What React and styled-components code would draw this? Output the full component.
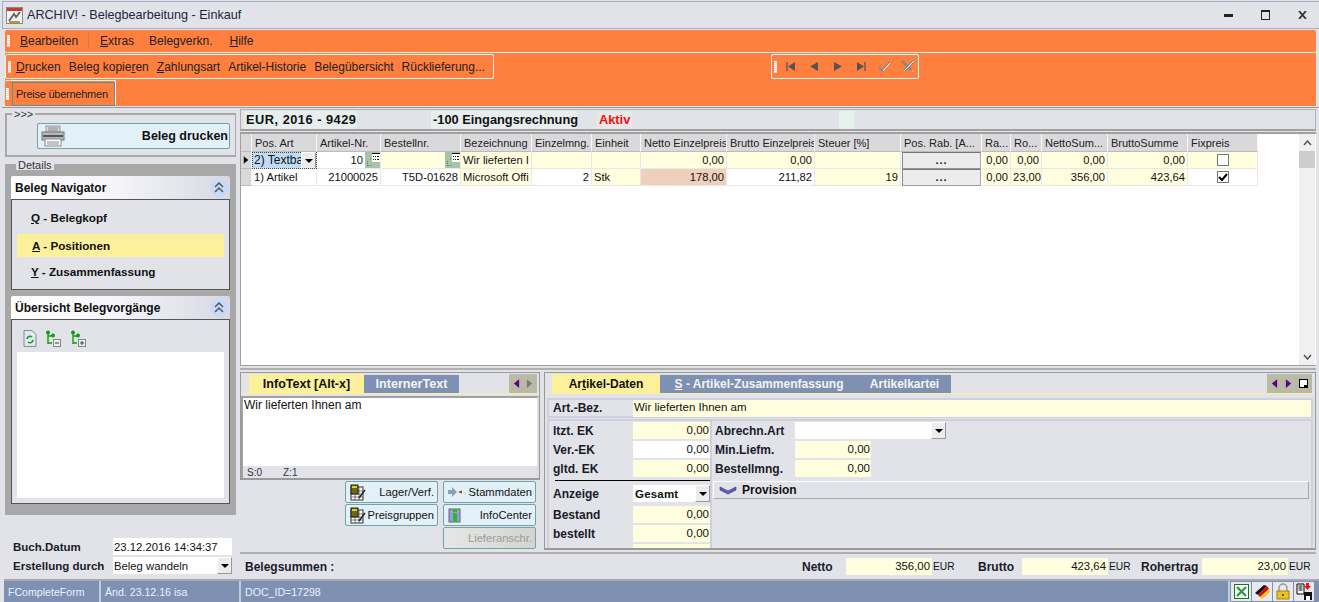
import React from "react";
import styled, { createGlobalStyle } from "styled-components";

const Global = createGlobalStyle`
  html, body { margin: 0; padding: 0; width: 1319px; height: 602px; overflow: hidden; background: #e2e3e8; }
  * { box-sizing: border-box; }
  #root { font: 12px "Liberation Sans", Arial, sans-serif; color: #111; }
`;

const Win = styled.div`
  width: 1319px; height: 602px; display: flex; flex-direction: column;
  background: #e2e3e8; padding-top: 1px; overflow: hidden;
  border-left: 2px solid #e2e3e8;
`;
const TitleBar = styled.div`
  height: 28px; flex: none; display: flex; align-items: center;
  border-top: 1px solid #a5a9c0; border-bottom: 1px solid #a5a9c0;
  padding: 0 0 0 4px; color: #1c2540;
  box-shadow: inset 1px 0 0 #a5a9c0;
`;
const TitleText = styled.span` font-size: 12.6px; margin-left: 4px; flex: 1; `;
const WinBtns = styled.div` display: flex; flex: none; margin-right: -2px; color: #222; align-items:center; `;
const WinBtn = styled.span` width: 37px; display: flex; justify-content: center; `;

const Orange = styled.div` margin: 1px 3px 0 3px; background: #ff7f3f; flex: none; `;
const MenuBar = styled(Orange)`
  height: 23px; display: flex; align-items: center; padding-left: 2px; margin-top: 1px;
  border-bottom: 1px solid #f0f0f0; border-radius: 2px;
`;
const Grip = styled.span`
  width: 3px; height: 12px; flex: none; margin-right: ${p => p.$mr ?? 10}px;
  background: repeating-linear-gradient(#fff 0 1px, #d8d8d8 1px 2px);
`;
const MenuItem = styled.span`
  font-size: 12px; color: #222; margin-right: ${p => p.$mr}px;
  u { text-decoration: underline; }
`;
const MenuSep = styled.span` width: 1px; height: 16px; background: #c87a50; margin-right: 11px; `;
const ToolBand = styled(Orange)` height: 53px; margin-top: 0; display: flex; flex-direction: column; `;
const ToolRow = styled.div` height: 27px; display: flex; padding-top: 1px; `;
const Tool = styled.div`
  height: 25px; border: 1px solid #f2f2f2; border-radius: 2px; display: flex; align-items: center; padding-left: 2px;
`;
const Print = styled(Tool)` width: 489px; `;
const Nav = styled(Tool)` width: 148px; margin-left: 277px; `;
const TB = styled.span` margin-right: 8px; color: #222; white-space: nowrap; `;
const NavI = styled.span` width: 23.5px; flex: none; display: flex; justify-content: center; `;
const PreiseWrap = styled.div`
  width: 111px; height: 26px; border: 1px solid #f2f2f2; border-left: none; border-bottom: none; border-radius: 2px; display: flex; align-items: center; padding-left: 1px;
`;
const Preise = styled.span`
  flex: 1; height: 24px; border: 1px solid #5f8e98; margin-left: -6px; padding-left: 3px;
  display: flex; align-items: center; font-size: 11px; letter-spacing: -0.25px; color: #222; white-space: nowrap;
`;

const Main = styled.div`
  flex: 1; min-height: 0; display: grid; grid-template-columns: 236px 1fr; padding: 0 3px 0 2px; border-top: 1px solid #999; margin-top: 1px;
`;
const Left = styled.div` display: flex; flex-direction: column; padding-top: 1px; min-height: 0; `;
const Right = styled.div` display: flex; flex-direction: column; padding-top: 1px; min-height: 0; min-width: 0; `;

const Group = styled.fieldset`
  margin: 0 0 0 1px; padding: 0; border: 1px solid #a8a8a8; border-width: 2px 1px 2px 2px; width: 231px; min-width: 0;
  legend { padding: 0 2px; margin-left: 5px; font-size: 11px; line-height: 10px; color: #333; }
`;
const PrintGroup = styled(Group)` height: 48px; display: flex; justify-content: flex-end; padding: 4px 5px 0 0; flex: none; `;
const DetailsGroup = styled(Group)`
  height: 355px; flex: none; margin-top: 3px; background: #a8a8a8; padding: 6px 5px 0 4px; position: relative;
  legend { background: #e2e3e8; }
`;
const PrintBtn = styled.div`
  width: 193px; height: 26px; border: 1px solid #6fa5a8; background: #e2f0f8; border-radius: 2px;
  display: flex; align-items: center; justify-content: space-between; padding: 0 1px 0 3px; font-weight: bold; font-size: 12.5px;
`;
const PanelHead = styled.div`
  height: 23px; display: flex; align-items: center; justify-content: space-between; padding: 0 2px 0 4px; margin-top: ${p => p.$mt || 0}px;
  background: linear-gradient(90deg, #fff 0%, #f6f6fa 45%, #d8d8e4 100%); font-weight: bold; font-size: 12px; border-radius: 2px 2px 0 0;
`;
const Collapse = styled.span`
  width: 18px; height: 18px; border-radius: 50%; background: #c6dcf4; display: flex; align-items: center; justify-content: center;
`;
const NavBody = styled.div`
  height: 91px; border: 1px solid #555; background: #e2e3e8; padding: 6px 5px 0 5px; display: flex; flex-direction: column;
`;
const NavItem = styled.div`
  height: 23px; flex: none; margin-bottom: ${p => p.$mb}px; display: flex; align-items: center; padding-left: ${p => p.$on ? 15 : 14}px; font-weight: bold; font-size: 11.7px;
  background: ${p => p.$on ? "#fdf09a" : "transparent"};
`;
const TreeBody = styled.div`
  height: 185px; border: 1px solid #555; background: #e2e3e8; padding: 10px 5px 0 5px; display: flex; flex-direction: column;
`;
const TreeIcons = styled.div` height: 22px; display: flex; gap: 8px; padding-left: 6px; flex: none; `;
const TreeArea = styled.div` flex: 1; background: #fff; margin-bottom: 5px; `;

const FormArea = styled.div`
  flex: 1; display: flex; flex-direction: column; justify-content: flex-end; padding: 0 8px 4px 9px;
`;
const FormRow = styled.div` display: flex; align-items: center; height: 19px; font-weight: bold; font-size: 11.5px; color: #1a1a2a; `;
const FormLabel = styled.span` width: 100px; flex: none; `;
const FormVal = styled.span`
  flex: 1; height: 17px; background: #fff; font-weight: normal; display: flex; align-items: center; justify-content: space-between; color: #111; padding-left: 1px; font-size: 11.3px; white-space: nowrap;
`;
const DropBtn = styled.span`
  width: 15px; height: 17px; flex: none; background: #ececec; border: 1px solid #fff; border-right-color: #999; border-bottom-color: #999; display: flex; align-items: center; justify-content: center;
  &::after { content: ""; border: 4px solid transparent; border-top-color: #000; border-bottom: none; width: 0; height: 0; }
`;

const InfoBar = styled.div`
  height: 22px; flex: none; border: 1px solid #b0b0b0; border-bottom: 2px solid #a0a0a0; display: flex; align-items: center; padding-left: 3px; font-weight: bold;
`;
const Seg = styled.span`
  height: 18px; background: ${p => p.$bg || "#e6eeee"}; color: ${p => p.$c || "#111"}; display: flex; align-items: center;
  margin-left: ${p => p.$ml}px; width: ${p => p.$w}px; padding-left: 2px; white-space: nowrap; font-size: 12.8px; letter-spacing: ${p => p.$ls || 0}px;
`;

const GridBox = styled.div`
  height: 234px; flex: none; margin-top: 1px; background: #fff; border-top: 2px solid #a0a0a0; border-left: 1px solid #a0a0a0; border-bottom: 1px solid #a0a0a0; display: flex; position: relative;
`;
const GridMain = styled.div` flex: 1; min-width: 0; `;
const Row = styled.div`
  display: grid; grid-template-columns: 11px 65px 64px 80px 71px 60px 49px 86px 88px 86px 81px 29px 31px 66px 80px 70px; height: ${p => p.$h}px; width: 1018px;
`;
const Head = styled.div`
  background: #d9d9dc; border-right: 1px solid #f8f8f8; border-bottom: 1px solid #bbb; padding: 0 3px; display: flex; align-items: center; font-size: 11px; overflow: hidden; white-space: nowrap; color: #222;
`;
const Cell = styled.div`
  background: ${p => p.$bg || "#fff"}; border-right: 1px solid #e8e8e8; border-bottom: 1px solid #e8e8e8; padding: 0 2px; display: flex; align-items: center;
  justify-content: ${p => p.$r ? "flex-end" : "flex-start"}; overflow: hidden; white-space: nowrap; font-size: 11.2px; color: #111; position: relative;
`;
const SelCell = styled(Cell)`
  background: #bfdcf5; outline: 1px dotted #444; outline-offset: -1px; padding: 0 16px 0 2px; justify-content: flex-start; font-size: 12px;
`;
const CellDrop = styled(DropBtn)` position: absolute; right: 0; top: 0; `;
const Lookup = styled.span`
  width: 15px; height: 16px; flex: none; background: #a8c4a8; display: flex; align-items: center; justify-content: center; margin-left: 2px; margin-right: -2px;
`;
const Ind = styled.div` background: #d9d9dc; border-right: 1px solid #f8f8f8; border-bottom: 1px solid #bbb; display: flex; align-items: center; justify-content: center; `;
const RabBtn = styled.div`
  background: #ececec; border: 1px solid #999; border-top-color: #777; border-left-color: #888; border-right-color: #aaa; margin: 0 1px; display: flex; align-items: center; justify-content: center; font-weight: bold; font-size: 11px; letter-spacing: 1px; padding-bottom: 2px;
`;
const Check = styled.span`
  width: 12px; height: 12px; background: #fff; border: 1px solid #777; display: flex; align-items: center; justify-content: center; margin: 0 auto;
`;
const Scroll = styled.div`
  position: absolute; top: 0; bottom: 0; right: 1px; width: 16px; background: #f0f0f0; display: flex; flex-direction: column; justify-content: space-between; align-items: center;
`;
const Thumb = styled.div` position: absolute; top: 17px; left: 0; width: 16px; height: 17px; background: #cdcdcd; `;
const ScrollBtn = styled.span` height: 17px; display: flex; align-items: center; `;

const Lower = styled.div` height: 182px; flex: none; display: flex; gap: 4px; margin-top: 2px; border-top: 2px solid #b0b0b0; padding-top: 2px; `;
const LeftPane = styled.div` width: 300px; flex: none; `;
const RightPane = styled.div`
  flex: 1; min-width: 0; border: 1px solid #999; border-bottom-width: 2px; height: 178px; padding-top: 1px; overflow: hidden;
`;
const TabBox = styled.div` height: 108px; border: 1px solid #999; border-width: 1px 1px 2px 1px; padding-top: 1px; `;
const TabStrip = styled.div`
  height: 20px; display: flex; align-items: flex-end; padding-left: ${p => p.$pl}px; border-bottom: 1px solid #fdf09a; position: relative;
`;
const Tab = styled.span`
  width: ${p => p.$w}px; height: ${p => p.$on ? 19 : 18}px; background: ${p => p.$on ? "#fdf09a" : "#7f91b3"}; color: ${p => p.$on ? "#111" : "#f4f4f4"};
  font-weight: bold; font-size: ${p => p.$fs || 12}px; display: flex; align-items: center; justify-content: center; white-space: nowrap; border-radius: ${p => p.$on ? "2px 2px 0 0" : 0};
`;
const TabArrows = styled.span`
  position: absolute; right: ${p => p.$r}px; top: 0; height: 19px; background: #b9b9a8; display: flex; align-items: center; gap: ${p => p.$gap}px; padding: 0 4px;
`;
const TextArea = styled.div`
  height: 82px; margin-top: 2px; border: 2px solid #a0a0a0; border-right-color: #ddd; border-bottom: none; background: #fff; display: flex; flex-direction: column; justify-content: space-between; font-size: 12px; color: #111;
`;
const TextLine = styled.div` padding: 0 1px; `;
const TextStatus = styled.div` height: 12px; background: #e2e3e8; display: flex; gap: 21px; padding-left: 4px; font-size: 10px; align-items: center; color: #334; `;

const BtnGrid = styled.div` display: grid; grid-template-columns: 93px 93px; gap: 1px 5px; justify-content: end; padding: 1px 4px 0 0; `;
const Btn = styled.div`
  height: 22px; border: 1px solid #6fa5a8; background: ${p => p.$off ? "linear-gradient(90deg,#e6e6e6,#d4d4d0)" : "#e2f0f8"}; border-radius: 2px; display: flex; align-items: center; justify-content: space-between; padding: 0 3px 0 4px; color: ${p => p.$off ? "#9a9a9a" : "#111"}; grid-column: ${p => p.$col || "auto"};
  font-size: 11.2px; white-space: nowrap;
`;
const ArtBez = styled.div`
  margin: 4px 2px 0 2px; height: 20px; background: #e2e3e8; border: 2px solid #cfcfdf; display: flex; align-items: center; padding-left: 4px;
`;
const Lab = styled.span` font-weight: bold; font-size: 12px; color: #1a1a2a; width: ${p => p.$w}px; flex: none; white-space: nowrap; padding-left: ${p => p.$pl || 0}px; `;
const FLab = styled(Lab)` margin-top: 2px; `;
const Inp = styled.span`
  height: 17px; display: flex; align-items: center; justify-content: ${p => p.$r ? "flex-end" : "flex-start"}; background: ${p => p.$bg || "#ffffe0"}; padding: 0 1px 2px; flex: ${p => p.$w ? "none" : 1}; width: ${p => p.$w}px; color: #111; font-size: 11.5px;
`;
const InpDrop = styled(Inp)` padding: 0; justify-content: flex-end; `;
const InpSel = styled(Inp)` padding: 0 0 0 1px; `;
const Body = styled.div`
  margin: 1px 2px 0 2px; display: grid; grid-template-columns: 161px 1fr; height: 130px; background: #cfcfdf; padding: 2px; gap: 0 2px; overflow: hidden;
`;
const Col = styled.div` background: #e2e3e8; padding: 1px 0 0 4px; min-width: 0; `;
const ColR = styled(Col)` padding: 1px 0 0 1px; `;
const FRow = styled.div` height: 19px; display: flex; align-items: flex-start; margin-top: ${p => p.$mt || 0}px; `;
const Rule = styled.div` height: 1px; background: #000; margin: 1px 0 4px 2px; `;
const Sel = styled.span` font-weight: bold; padding-left: 1px; flex: 1; letter-spacing: .2px; `;
const ProvHead = styled.div`
  height: 18px; margin: 2px 2px 0 0; border: 1px solid #a8a8a8; border-top-color: #fff; border-left-color: #fff; display: flex; align-items: center; gap: 5px; font-weight: bold; font-size: 12px; padding-left: 5px;
`;
const SumBar = styled.div`
  height: 27px; flex: none; margin-top: 2px; border-top: 2px solid #b0b0b0; display: flex; align-items: center; padding-left: 5px;
`;
const SumLab = styled.span` font-weight: bold; font-size: 12px; margin-left: ${p => p.$ml}px; width: ${p => p.$w}px; color: #1a1a2a; white-space: nowrap; `;
const SumVal = styled.span` width: 86px; height: 17px; background: #ffffe0; display: flex; align-items: center; justify-content: flex-end; padding: 0 2px 1px 0; font-size: 11.4px; `;
const Eur = styled.span` margin-left: 1px; font-size: 10.2px; width: 19px; `;

const Status = styled.div`
  height: 23px; flex: none; margin: 0 0 0 2px; background: #7f91b3; border-top: 2px solid #a8a8b4; display: flex; color: #eef; font-size: 10.6px;
`;
const StatCell = styled.div` width: ${p => p.$w}px; flex: ${p => p.$w ? "none" : 1}; border-right: 2px solid #c4ccdc; display: flex; align-items: center; padding-left: 4px; white-space: nowrap; `;
const StatIcons = styled.div` width: 89px; display: flex; gap: 1px; align-items: center; padding-left: 1px; flex: none; `;
const StatIcon = styled.span` width: 20px; height: 19px; background: #e8e8ee; display: flex; align-items: center; justify-content: center; `;

const Tri = ({ dir = "r", c = "#000", s = 8 }) => (
  <svg width={s} height={s + 2} viewBox="0 0 8 10"><path d={dir === "r" ? "M1 0L7 5L1 10Z" : "M7 0L1 5L7 10Z"} fill={c} /></svg>
);
const AppIcon = () => (
  <svg width="17" height="17" viewBox="0 0 17 17"><rect x=".5" y=".5" width="16" height="16" fill="#f4f4f4" stroke="#888"/><rect x="1" y="1" width="15" height="3" fill="#c83c2c"/><path d="M3 14L8 7L10 10L14 5" stroke="#666" strokeWidth="2" fill="none"/><path d="M3 15h11" stroke="#b89a30" strokeWidth="2"/></svg>
);
const Printer = () => (
  <svg width="24" height="22" viewBox="0 0 24 22"><rect x="5" y="1" width="14" height="6" fill="#d8d8dc" stroke="#999"/><path d="M7 3h10M7 5h10" stroke="#888"/><rect x="1" y="7" width="22" height="8" fill="#b4b8bc" stroke="#777"/><rect x="2" y="10" width="20" height="2" fill="#555"/><rect x="4" y="14" width="16" height="7" fill="#fff" stroke="#888"/><path d="M6 17h12M6 19h12" stroke="#888"/></svg>
);
const Chevrons = () => (
  <svg width="10" height="11" viewBox="0 0 10 11" fill="none" stroke="#556" strokeWidth="1.5"><path d="M1 5L5 1L9 5M1 10L5 6L9 10"/></svg>
);
const TreeDoc = () => (
  <svg width="14" height="17" viewBox="0 0 14 17"><path d="M1 .5H9L13 4.5V16.5H1Z" fill="#dfe8f4" stroke="#889"/><path d="M4 9a3 3 0 015-2M10 10a3 3 0 01-5 2" stroke="#1a9a1a" strokeWidth="1.6" fill="none"/></svg>
);
const TreeNode = ({ plus }) => (
  <svg width="17" height="17" viewBox="0 0 17 17"><path d="M3 2V14M3 6H8M3 13H7" stroke="#0ca00c" strokeWidth="1.4" fill="none"/><circle cx="3" cy="2.5" r="2" fill="#0ca00c"/><circle cx="8" cy="5.5" r="2" fill="#0ca00c"/><rect x="8.5" y="9.5" width="7" height="7" fill="#eee" stroke="#888"/><path d={plus ? "M10 13h4M12 11v4" : "M10 13h4"} stroke="#444"/></svg>
);
const LookupIcon = () => (
  <svg width="14" height="14" viewBox="0 0 14 14"><rect x="6" y="0" width="8" height="9" fill="#fff"/><path d="M6 .5h8M7 3.500h1M9 3.500h1M11 3.500h2M7 6.500h1M9 6.500h1M11 6.500h2" stroke="#111"/><path d="M1.500 13V8M1.500 12.500H6M4 6h2" stroke="#4f7f60" strokeDasharray="1 1"/></svg>
);
const Calc = () => (
  <svg width="16" height="17" viewBox="0 0 16 17"><rect x="1" y="3" width="12" height="13" fill="#fff" stroke="#333"/><path d="M1 7H13M1 10H13M1 13H13M5 3V16M9 3V16" stroke="#444" strokeWidth=".7"/><rect x="1" y="1" width="7" height="9" fill="#6a6a10" stroke="#222"/><rect x="2" y="2" width="5" height="2" fill="#d8d030"/><path d="M9 14L15 6" stroke="#222" strokeWidth="1.4"/></svg>
);
const ArrowIcon = () => (
  <svg width="14" height="10" viewBox="0 0 14 10"><path d="M0 3H4V0L9 5L4 10V7H0Z" fill="#8aa0b8"/><path d="M14 3.5L10 5L14 6.5Z" fill="#c02020"/></svg>
);
const InfoIcon = () => (
  <svg width="14" height="15" viewBox="0 0 14 15"><rect x="1" y="1" width="11" height="13" fill="#9a9ae0" stroke="#667"/><rect x="5" y="1" width="4" height="3" fill="#20c020"/><rect x="5" y="5" width="4" height="9" fill="#20c020"/></svg>
);
const ProvIcon = () => (
  <svg width="18" height="9" viewBox="0 0 18 9"><path d="M1 1L9 5L17 1V4L9 8L1 4Z" fill="#6a5ac8" stroke="#223" strokeWidth=".5"/></svg>
);
const Excel = () => (
  <svg width="15" height="15" viewBox="0 0 15 15"><rect x=".5" y=".5" width="14" height="14" fill="#fff" stroke="#117a11"/><path d="M3 3L12 12M12 3L3 12" stroke="#2a9a4a" strokeWidth="2.4"/></svg>
);
const Flag = () => (
  <svg width="17" height="15" viewBox="0 0 17 15"><path d="M1 9L10 1L13 2L4 11Z" fill="#111"/><path d="M4 11L13 2L15 5L6 13Z" fill="#d01010"/><path d="M6 13L15 5L16 8L8 15Z" fill="#f4c010"/></svg>
);
const Lock = () => (
  <svg width="14" height="17" viewBox="0 0 14 17"><path d="M3 8V5a4 4 0 018 0V8" fill="none" stroke="#999" strokeWidth="1.5"/><rect x="1" y="8" width="12" height="8" fill="#f0c020" stroke="#a08010"/><rect x="6" y="11" width="2" height="2" fill="#553"/></svg>
);
const SaveDoc = () => (
  <svg width="17" height="17" viewBox="0 0 17 17"><path d="M1 1H8V11H1Z" fill="#fff" stroke="#000"/><path d="M2.500 3h4M2.500 5h4M2.500 7h4" stroke="#000"/><path d="M10 0h3v3h2l-3.500 4L8 3h2Z" fill="#e01818"/><rect x="8" y="9" width="8" height="8" fill="#111"/><rect x="10" y="13" width="4" height="4" fill="#fff"/></svg>
);
const NavFirst = () => <svg width="10" height="9" viewBox="0 0 10 9"><path d="M1 0V9" stroke="#556" strokeWidth="1.300"/><path d="M9 0V9L2 4.500Z" fill="#555"/></svg>;
const NavPrev = () => <svg width="8" height="9" viewBox="0 0 8 9"><path d="M8 0V9L0 4.500Z" fill="#555"/></svg>;
const NavNext = () => <svg width="8" height="9" viewBox="0 0 8 9"><path d="M0 0V9L8 4.500Z" fill="#555"/></svg>;
const NavLast = () => <svg width="10" height="9" viewBox="0 0 10 9"><path d="M9 0V9" stroke="#556" strokeWidth="1.300"/><path d="M1 0V9L8 4.500Z" fill="#555"/></svg>;
const NavOk = () => <svg width="13" height="11" viewBox="0 0 13 11" fill="none"><path d="M1 6L4 10" stroke="#888" strokeWidth="2"/><path d="M4 10L12 1" stroke="#888" strokeWidth="2.400"/><path d="M5 10L12 2" stroke="#fff"/></svg>;
const NavNo = () => <svg width="14" height="13" viewBox="0 0 14 13" fill="none"><path d="M1 1L10 10" stroke="#888" strokeWidth="2.500"/><path d="M13 1L3 11" stroke="#888" strokeWidth="2.500"/><path d="M13 1L3 11" stroke="#fff"/><path d="M11 10l2 2" stroke="#fff" strokeDasharray="1 1"/></svg>;

const heads = ["Pos. Art","Artikel-Nr.","Bestellnr.","Bezeichnung","Einzelmng.","Einheit","Netto Einzelpreis","Brutto Einzelpreis","Steuer [%]","Pos. Rab. [A...","Ra...","Ro...","NettoSum...","BruttoSumme","Fixpreis"];
const Y = "#ffffe0";

export default function App() {
  return (
    <Win>
      <Global />
      <TitleBar>
        <AppIcon />
        <TitleText>ARCHIV! - Belegbearbeitung - Einkauf</TitleText>
        <WinBtns>
          <WinBtn><svg width="9" height="3"><rect width="9" height="3" fill="#222"/></svg></WinBtn>
          <WinBtn><svg width="9" height="10" viewBox="0 0 9 10"><rect x=".5" y="1" width="8" height="8.500" fill="none" stroke="#222"/><rect width="9" height="2" fill="#222"/></svg></WinBtn>
          <WinBtn><svg width="9" height="8" viewBox="0 0 9 8"><path d="M1 0L8 8M8 0L1 8" stroke="#333" strokeWidth="1.800"/></svg></WinBtn>
        </WinBtns>
      </TitleBar>
      <MenuBar>
        <Grip />
        <MenuItem $mr={10}><u>B</u>earbeiten</MenuItem>
        <MenuSep />
        <MenuItem $mr={15}><u>E</u>xtras</MenuItem>
        <MenuItem $mr={17}>Belegverkn.</MenuItem>
        <MenuItem $mr={0}><u>H</u>ilfe</MenuItem>
      </MenuBar>
      <ToolBand>
        <ToolRow>
          <Print>
            <Grip $mr={5} />
            <TB><u>D</u>rucken</TB><TB>Beleg kopie<u>r</u>en</TB><TB><u>Z</u>ahlungsart</TB><TB>Artikel-Historie</TB><TB>Belegübersicht</TB><TB>Rücklieferung...</TB>
          </Print>
          <Nav>
            <Grip $mr={2} />
            <NavI><NavFirst /></NavI><NavI><NavPrev /></NavI><NavI><NavNext /></NavI><NavI><NavLast /></NavI><NavI><NavOk /></NavI><NavI><NavNo /></NavI>
          </Nav>
        </ToolRow>
        <PreiseWrap>
          <Grip $mr={9} />
          <Preise>Preise übernehmen</Preise>
        </PreiseWrap>
      </ToolBand>
      <Main>
        <Left>
          <PrintGroup>
            <legend>&gt;&gt;&gt;</legend>
            <PrintBtn><Printer /><span>Beleg drucken</span></PrintBtn>
          </PrintGroup>
          <DetailsGroup>
            <legend>Details</legend>
            <PanelHead>Beleg Navigator<Collapse><Chevrons /></Collapse></PanelHead>
            <NavBody>
              <NavItem $mb={5}><span><u>Q</u> - Belegkopf</span></NavItem>
              <NavItem $mb={3} $on><span><u>A</u> - Positionen</span></NavItem>
              <NavItem $mb={0}><span><u>Y</u> - Zusammenfassung</span></NavItem>
            </NavBody>
            <PanelHead $mt={6}>Übersicht Belegvorgänge<Collapse><Chevrons /></Collapse></PanelHead>
            <TreeBody>
              <TreeIcons><TreeDoc /><TreeNode /><TreeNode plus /></TreeIcons>
              <TreeArea />
            </TreeBody>
          </DetailsGroup>
          <FormArea>
            <FormRow><FormLabel>Buch.Datum</FormLabel><FormVal>23.12.2016 14:34:37</FormVal></FormRow>
            <FormRow><FormLabel>Erstellung durch</FormLabel><FormVal>Beleg wandeln<DropBtn /></FormVal></FormRow>
          </FormArea>
        </Left>
        <Right>
          <InfoBar>
            <Seg $w={113} $ls={0.5}>EUR, 2016 - 9429</Seg>
            <Seg $w={146} $ml={74}>-100 Eingangsrechnung</Seg>
            <Seg $w={35} $ml={20} $c="#f01010" $bg="#e8e8e8">Aktiv</Seg>
            <Seg $w={152} $ml={70} $bg="linear-gradient(90deg,#e2e3e8 90%,#e6f0ec 90%)" />
          </InfoBar>
          <GridBox>
            <GridMain>
              <Row $h={18}>
                <Head />
                {heads.map(h => <Head key={h}>{h}</Head>)}
              </Row>
              <Row $h={17}>
                <Ind><Tri s={6} /></Ind>
                <SelCell>2) Textba<CellDrop /></SelCell>
                <Cell $r>10<Lookup><LookupIcon /></Lookup></Cell>
                <Cell $r $bg={Y}><Lookup><LookupIcon /></Lookup></Cell>
                <Cell $bg={Y}>Wir lieferten I</Cell>
                <Cell $bg={Y} />
                <Cell $bg={Y} />
                <Cell $r $bg={Y}>0,00</Cell>
                <Cell $r $bg={Y}>0,00</Cell>
                <Cell $bg={Y} />
                <RabBtn>...</RabBtn>
                <Cell $r $bg={Y}>0,00</Cell>
                <Cell $r $bg={Y}>0,00</Cell>
                <Cell $r $bg={Y}>0,00</Cell>
                <Cell $r $bg={Y}>0,00</Cell>
                <Cell $bg={Y}><Check /></Cell>
              </Row>
              <Row $h={17}>
                <Ind />
                <Cell>1) Artikel</Cell>
                <Cell $r>21000025</Cell>
                <Cell $r>T5D-01628</Cell>
                <Cell $bg={Y}>Microsoft Offi</Cell>
                <Cell $r>2</Cell>
                <Cell $bg={Y}>Stk</Cell>
                <Cell $r $bg="#f0d0bc">178,00</Cell>
                <Cell $r>211,82</Cell>
                <Cell $r $bg={Y}>19</Cell>
                <RabBtn>...</RabBtn>
                <Cell $r $bg={Y}>0,00</Cell>
                <Cell $bg={Y}>23,00</Cell>
                <Cell $r $bg={Y}>356,00</Cell>
                <Cell $r $bg={Y}>423,64</Cell>
                <Cell><Check><svg width="10" height="9" viewBox="0 0 10 9"><path d="M1 4L4 7L9 1" fill="none" stroke="#000" strokeWidth="2"/></svg></Check></Cell>
              </Row>
            </GridMain>
            <Scroll>
              <Thumb />
              <ScrollBtn><svg width="9" height="6" viewBox="0 0 9 6"><path d="M1 5L4.500 1L8 5" fill="none" stroke="#555" strokeWidth="1.500"/></svg></ScrollBtn>
              <ScrollBtn><svg width="9" height="6" viewBox="0 0 9 6"><path d="M1 1L4.500 5L8 1" fill="none" stroke="#555" strokeWidth="1.500"/></svg></ScrollBtn>
            </Scroll>
          </GridBox>
          <Lower>
            <LeftPane>
              <TabBox>
                <TabStrip $pl={8}>
                  <Tab $on $w={115} $fs={12.5}>InfoText [Alt-x]</Tab>
                  <Tab $w={95} $fs={12.6}>InternerText</Tab>
                  <TabArrows $r={2} $gap={6}><Tri dir="l" c="#600080" s={7} /><Tri c="#807878" s={7} /></TabArrows>
                </TabStrip>
                <TextArea>
                  <TextLine>Wir lieferten Ihnen am</TextLine>
                  <TextStatus><span>S:0</span><span>Z:1</span></TextStatus>
                </TextArea>
              </TabBox>
              <BtnGrid>
                <Btn><Calc /><span>Lager/Verf.</span></Btn>
                <Btn><ArrowIcon /><span>Stammdaten</span></Btn>
                <Btn><Calc /><span>Preisgruppen</span></Btn>
                <Btn><InfoIcon /><span>InfoCenter</span></Btn>
                <Btn $off $col="2"><span />Lieferanschr.</Btn>
              </BtnGrid>
            </LeftPane>
            <RightPane>
              <TabStrip $pl={7}>
                <Tab $on $w={108}><span>Ar<u>t</u>ikel-Daten</span></Tab>
                <Tab $w={198}><span><u>S</u> - Artikel-Zusammenfassung</span></Tab>
                <Tab $w={93}>Artikelkartei</Tab>
                <TabArrows $r={3} $gap={7}><Tri dir="l" c="#600080" s={7} /><Tri c="#600080" s={7} /><svg width="9" height="9" viewBox="0 0 9 9"><rect x=".5" y=".5" width="8" height="8" fill="#fff" stroke="#000"/><rect x="5" y="6" width="3" height="2"/></svg></TabArrows>
              </TabStrip>
              <ArtBez><Lab $w={80}>Art.-Bez.</Lab><Inp>Wir lieferten Ihnen am</Inp></ArtBez>
              <Body>
                <Col>
                  <FRow><FLab $w={80}>ltzt. EK</FLab><Inp $r>0,00</Inp></FRow>
                  <FRow><FLab $w={80}>Ver.-EK</FLab><Inp $r $bg="#fff">0,00</Inp></FRow>
                  <FRow><FLab $w={80}>gltd. EK</FLab><Inp $r>0,00</Inp></FRow>
                  <Rule />
                  <FRow><FLab $w={80}>Anzeige</FLab><InpSel $bg="#fff"><Sel>Gesamt</Sel><DropBtn /></InpSel></FRow>
                  <FRow $mt={2}><FLab $w={80}>Bestand</FLab><Inp $r>0,00</Inp></FRow>
                  <FRow><FLab $w={80}>bestellt</FLab><Inp $r>0,00</Inp></FRow>
                  <FRow><FLab $w={80} /><Inp /></FRow>
                </Col>
                <ColR>
                  <FRow><FLab $w={82} $pl={2}>Abrechn.Art</FLab><InpDrop $w={151} $bg="#fff"><DropBtn /></InpDrop></FRow>
                  <FRow><FLab $w={82} $pl={2}>Min.Liefm.</FLab><Inp $r $w={76}>0,00</Inp></FRow>
                  <FRow><FLab $w={82} $pl={2}>Bestellmng.</FLab><Inp $r $w={76}>0,00</Inp></FRow>
                  <ProvHead><ProvIcon />Provision</ProvHead>
                </ColR>
              </Body>
            </RightPane>
          </Lower>
          <SumBar>
            <SumLab $w={100}>Belegsummen :</SumLab>
            <SumLab $ml={457} $w={44}>Netto</SumLab>
            <SumVal>356,00</SumVal><Eur>EUR</Eur>
            <SumLab $ml={26} $w={44}>Brutto</SumLab>
            <SumVal>423,64</SumVal><Eur>EUR</Eur>
            <SumLab $ml={13} $w={61}>Rohertrag</SumLab>
            <SumVal>23,00</SumVal><Eur>EUR</Eur>
          </SumBar>
        </Right>
      </Main>
      <Status>
        <StatCell $w={97}>FCompleteForm</StatCell>
        <StatCell $w={140}>Änd. 23.12.16 isa</StatCell>
        <StatCell>DOC_ID=17298</StatCell>
        <StatIcons>
          <StatIcon><Excel /></StatIcon><StatIcon><Flag /></StatIcon><StatIcon><Lock /></StatIcon><StatIcon><SaveDoc /></StatIcon>
        </StatIcons>
      </Status>
    </Win>
  );
}
